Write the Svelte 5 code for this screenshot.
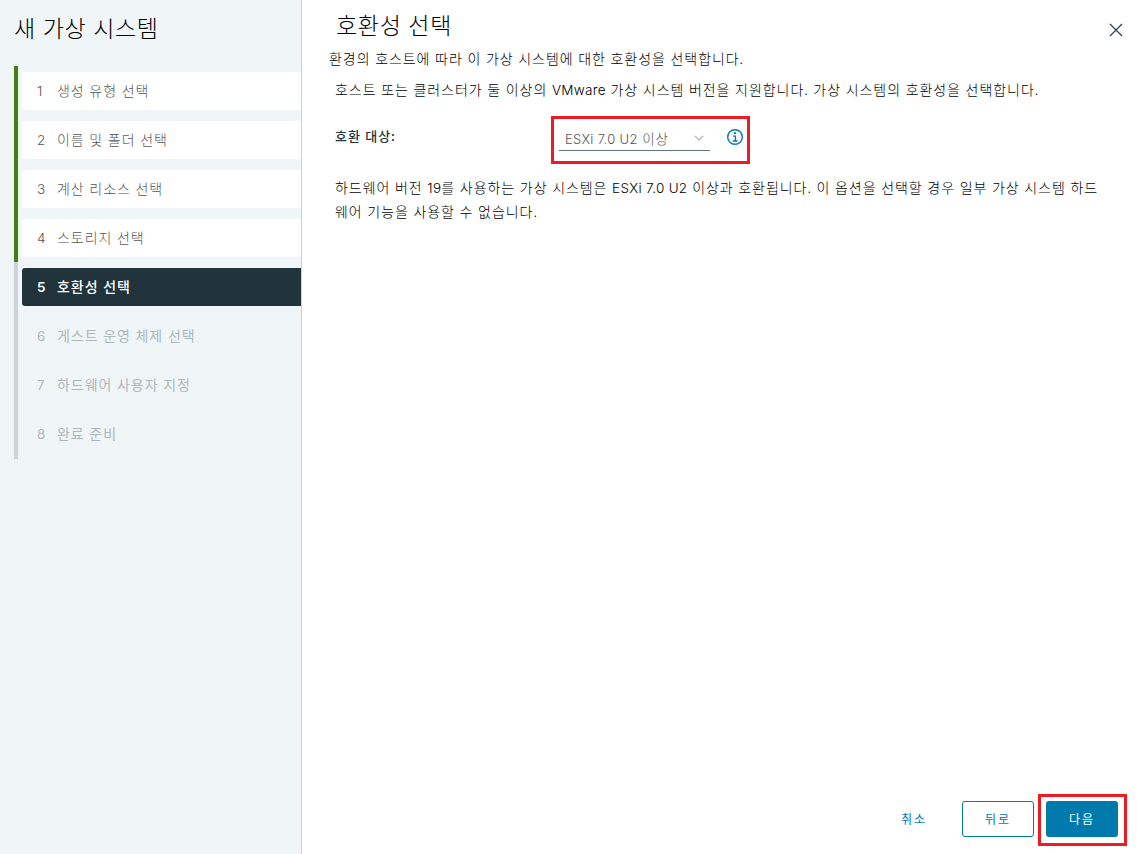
<script>
  const steps = [
    '생성 유형 선택',
    '이름 및 폴더 선택',
    '계산 리소스 선택',
    '스토리지 선택',
    '호환성 선택',
    '게스트 운영 체제 선택',
    '하드웨어 사용자 지정',
    '완료 준비'
  ];
  const current = 4;
  const state = (i) => (i < current ? 'done' : i === current ? 'active' : 'todo');
</script>

<div class="wizard">
  <aside>
    <h1>새 가상 시스템</h1>
    <ol>
      {#each steps as step, i}
        <li class={state(i)}>
          <button class="step"><span class="num">{i + 1}</span><span class="name">{step}</span></button>
        </li>
      {/each}
    </ol>
  </aside>

  <main>
    <header>
      <h2>호환성 선택</h2>
      <button class="close" aria-label="닫기">
        <svg width="14" height="14" viewBox="0 0 14 14"><path d="M1 1 13 13M13 1 1 13" fill="none" stroke="#314351" stroke-width="1.3" /></svg>
      </button>
    </header>
    <p class="sub">환경의 호스트에 따라 이 가상 시스템에 대한 호환성을 선택합니다.</p>

    <section>
      <p class="intro">호스트 또는 클러스터가 둘 이상의 <span class="lat">VMware</span> 가상 시스템 버전을 지원합니다. 가상 시스템의 호환성을 선택합니다.</p>
      <div class="field">
        <span class="label">호환 대상:</span>
        <div class="marked">
          <div class="select">
            <span class="value"><span class="lat">ESXi 7.0 U2</span> 이상</span>
            <svg width="10" height="6" viewBox="0 0 10 6"><path d="M.8.8 5 5 9.2.8" fill="none" stroke="#adb3b6" stroke-width="1.2" /></svg>
          </div>
          <svg class="info" width="16" height="16" viewBox="0 0 16 16">
            <circle cx="8" cy="8" r="7.3" fill="none" stroke="#0079ad" stroke-width="1.4" />
            <circle cx="7.9" cy="4.2" r="1.1" fill="#0079ad" />
            <path d="M6 7.1h2.4v4.7M5.7 12h4.8" fill="none" stroke="#0079ad" stroke-width="1.4" />
          </svg>
        </div>
      </div>
      <p class="desc">하드웨어 버전 <span class="lat">19</span>를 사용하는 가상 시스템은 <span class="lat">ESXi 7.0 U2</span> 이상과 호환됩니다. 이 옵션을 선택할 경우 일부 가상 시스템 하드<br />웨어 기능을 사용할 수 없습니다.</p>
    </section>

    <footer>
      <button class="btn link">취소</button>
      <button class="btn outline">뒤로</button>
      <div class="next"><button class="btn primary">다음</button></div>
    </footer>
  </main>
</div>

<style>
  :global(body) { margin: 0; background: #fff; }
  * { box-sizing: border-box; }
  .wizard {
    display: flex;
    width: 1137px;
    height: 854px;
    overflow: hidden;
    font: 300 14px/24px 'Noto Sans CJK KR', sans-serif;
    letter-spacing: 0.94px;
    word-spacing: 0.65px;
    color: #000;
    white-space: nowrap;
  }
  button { font: inherit; letter-spacing: inherit; word-spacing: inherit; border: 0; padding: 0; margin: 0; background: none; color: inherit; }
  h1, h2, p, ol { margin: 0; padding: 0; }
  h1, h2 { font-size: 23px; font-weight: 300; line-height: 32px; letter-spacing: 0.7px; word-spacing: 1px; }
  .lat { font-family: Inter, sans-serif; font-size: 13.5px; line-height: 0; letter-spacing: 0.3px; word-spacing: 0; }

  aside { width: 302px; background: #f0f5f8; border-right: 1px solid #c8d1d6; padding: 11px 0 0 14px; }
  ol { list-style: none; margin-top: 23px; }
  li { height: 49px; border-left: 4px solid #ccd4d9; padding: 6px 0 0 4px; }
  li.done { border-left-color: #42810e; }
  li:last-child { height: 50px; }
  .step { display: flex; align-items: center; width: 100%; height: 38px; padding-left: 15px; border-radius: 3px; text-align: left; color: #565656; }
  .num { width: 20px; font-family: Inter, sans-serif; font-size: 13.5px; }
  .name { padding-bottom: 3px; }
  .done .step { background: #fff; }
  .active .step { background: #21333b; color: #fff; font-weight: 500; border-radius: 3px 0 0 3px; }
  .active .num { font-weight: 600; }
  .todo .step { color: #aeb8bc; font-weight: 400; }

  main { flex: 1; display: flex; flex-direction: column; padding: 8px 10px 8px 27px; }
  header { display: flex; justify-content: space-between; padding-left: 7px; }
  .close { width: 14px; height: 14px; margin-top: 15px; margin-right: 4px; line-height: 0; }
  .sub { margin-top: 6px; }
  section { flex: 1; padding-left: 6px; }
  .intro { margin-top: 7px; }
  .field { display: flex; height: 48px; margin-top: 15px; }
  .label { width: 216px; padding-top: 8px; font-size: 13px; font-weight: 500; color: #21333b; }
  .marked { display: flex; width: 199px; height: 48px; border: 3px solid #ed1c24; padding: 7px 4px 0 5px; justify-content: space-between; }
  .select { display: flex; align-items: center; justify-content: space-between; width: 151px; height: 25px; border-bottom: 1px solid #5f7480; padding: 0 6px 0 6px; color: #565656; }
  .value { font-size: 13.5px; padding-bottom: 1px; }
  .select .lat { font-size: 13px; }
  .info { margin-top: 3px; }
  .desc { margin-top: 11px; }

  footer { display: flex; justify-content: flex-end; align-items: flex-start; height: 52px; }
  .btn { width: 72px; height: 36px; border-radius: 3px; font-size: 12px; color: #0079ad; letter-spacing: 2px; font-weight: 400; }
  .link, .outline { margin-top: 7px; }
  .link { margin-right: 12px; }
  .outline { border: 1px solid #0079ad; }
  .primary { background: #0079ad; color: #fff; }
  .next { display: flex; margin-left: 4px; border: 3px solid #ed1c24; width: 89px; height: 52px; padding: 4px 0 0 5px; }
</style>
